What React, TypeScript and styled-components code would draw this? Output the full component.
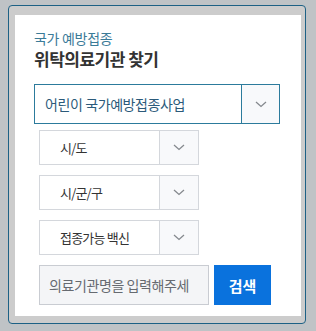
import { FunctionComponent } from 'react';
import styled, { createGlobalStyle } from 'styled-components';

const GlobalStyle = createGlobalStyle`
  html, body {
    margin: 0;
    padding: 0;
    background: #bfc3c6;
    font-family: "Noto Sans CJK KR", "Noto Sans", sans-serif;
  }
`;

const Chevron: FunctionComponent = () => (
  <svg width="12" height="7" viewBox="0 0 12 7" aria-hidden>
    <polyline
      points="1,1 6,5.5 11,1"
      fill="none"
      stroke="#85898e"
      strokeWidth="1.3"
    />
  </svg>
);

type SelectProps = { label: string; primary?: boolean };

const Select: FunctionComponent<SelectProps> = ({ label, primary }) => (
  <SelectBox $primary={primary}>
    <SelectValue $primary={primary}>{label}</SelectValue>
    <ArrowCell $primary={primary}>
      <Chevron />
    </ArrowCell>
  </SelectBox>
);

export default function App() {
  return (
    <>
      <GlobalStyle />
      <Frame>
        <Panel>
          <Eyebrow>국가 예방접종</Eyebrow>
          <Title>위탁의료기관 찾기</Title>
          <Select primary label="어린이 국가예방접종사업" />
          <SubList>
            <Select label="시/도" />
            <Select label="시/군/구" />
            <Select label="접종가능 백신" />
            <SearchRow>
              <SearchInput placeholder="의료기관명을 입력해주세요" />
              <SearchButton>검색</SearchButton>
            </SearchRow>
          </SubList>
        </Panel>
      </Frame>
    </>
  );
}

const Frame = styled.div`
  box-sizing: border-box;
  margin: 5px 0 0 8px;
  width: 298px;
  height: 319px;
  border: 1px solid #1d6185;
  border-radius: 4px;
  background: #cccccc;
  padding: 9px 4px 7px 6px;
`;

const Panel = styled.div`
  box-sizing: border-box;
  height: 100%;
  background: #ffffff;
  padding: 13px 21px 0 19px;
  display: flex;
  flex-direction: column;
`;

const Eyebrow = styled.div`
  font-size: 14px;
  line-height: 20px;
  letter-spacing: -0.3px;
  color: #3b7b98;
`;

const Title = styled.h2`
  margin: 0 0 14px;
  font-size: 17px;
  line-height: 22px;
  font-weight: 700;
  letter-spacing: -0.5px;
  color: #333333;
`;

const SelectBox = styled.div<{ $primary?: boolean }>`
  box-sizing: border-box;
  display: flex;
  width: ${(p) => (p.$primary ? '246px' : '160px')};
  height: ${(p) => (p.$primary ? '40px' : '35px')};
  border: 1px solid ${(p) => (p.$primary ? '#2c7b9c' : '#d4d7dc')};
  background: #ffffff;
`;

const SelectValue = styled.div<{ $primary?: boolean }>`
  flex: 1;
  display: flex;
  align-items: center;
  padding-left: ${(p) => (p.$primary ? '10px' : '20px')};
  font-size: ${(p) => (p.$primary ? '14px' : '13px')};
  letter-spacing: ${(p) => (p.$primary ? '-0.4px' : '-0.8px')};
  color: ${(p) => (p.$primary ? '#2b5a7a' : '#333333')};
`;

const ArrowCell = styled.div<{ $primary?: boolean }>`
  width: ${(p) => (p.$primary ? '37px' : '38px')};
  display: flex;
  align-items: center;
  justify-content: center;
  border-left: 1px solid ${(p) => (p.$primary ? '#2c7b9c' : '#d4d7dc')};
  background: #f8f9fb;
`;

const SubList = styled.div`
  display: flex;
  flex-direction: column;
  gap: 10px;
  margin: 6px 0 0 5px;
`;

const SearchRow = styled.div`
  display: flex;
  gap: 5px;
`;

const SearchInput = styled.input`
  box-sizing: border-box;
  width: 170px;
  height: 40px;
  border: 1px solid #c9ccd2;
  background: #f4f5f7;
  padding: 0 19px 0 9px;
  font-family: inherit;
  font-size: 14px;
  letter-spacing: -0.4px;
  outline: none;

  &::placeholder {
    color: #666a70;
  }
`;

const SearchButton = styled.button`
  width: 57px;
  height: 40px;
  border: none;
  background: #0a72dd;
  color: #ffffff;
  font-family: inherit;
  font-size: 15px;
  font-weight: 700;
  cursor: pointer;
`;
